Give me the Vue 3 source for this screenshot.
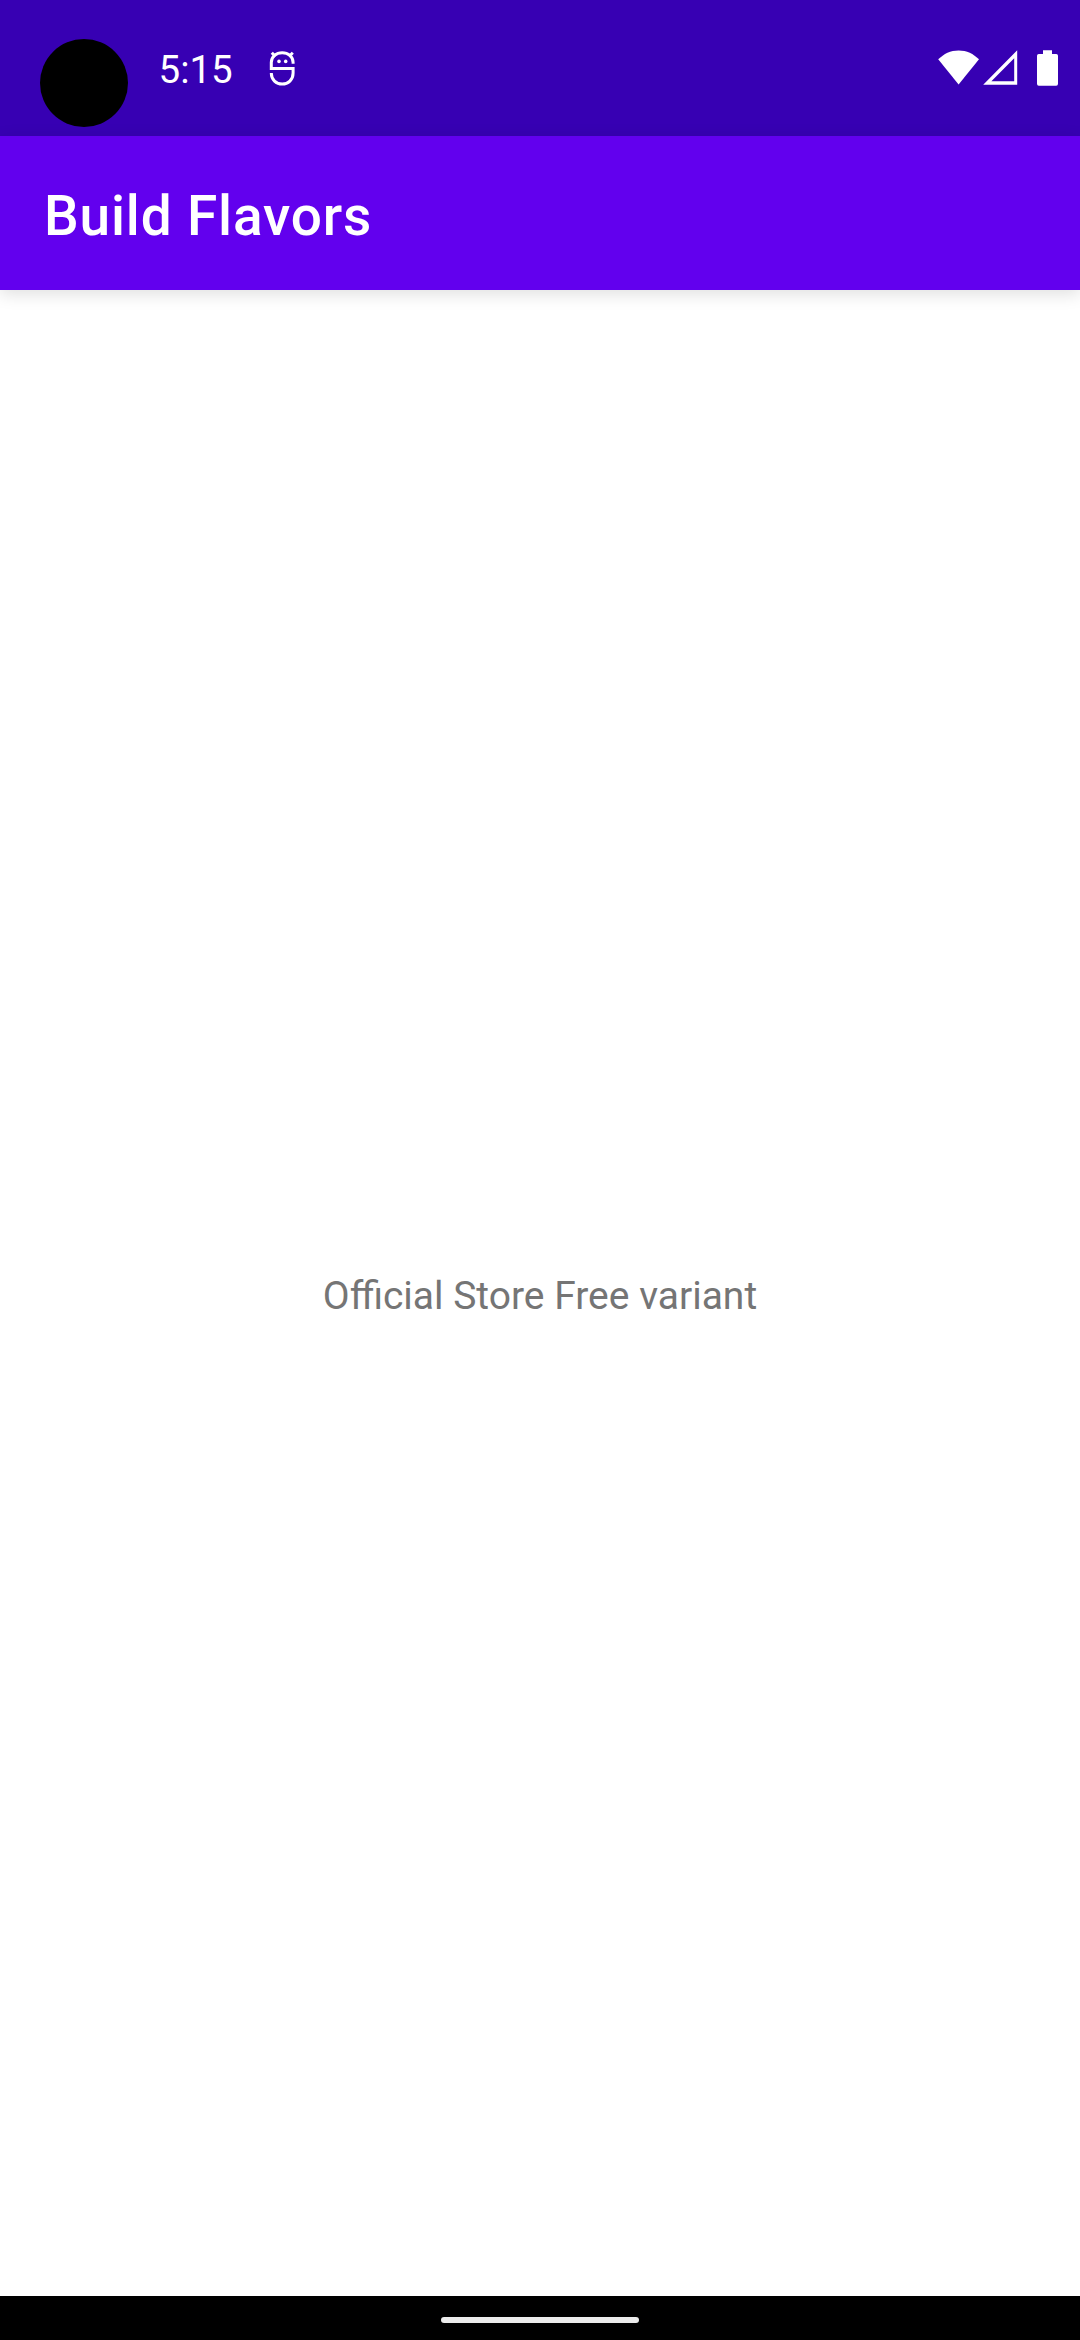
<script setup>
const time = '5:15'
const title = 'Build Flavors'
const message = 'Official Store Free variant'
</script>

<template>
  <div class="screen">
    <header class="status-bar">
      <div class="status-left">
        <span class="camera"></span>
        <span class="time">{{ time }}</span>
        <svg class="debug-icon" width="27" height="37" viewBox="0 0 27 37" fill="none" stroke="#fff">
          <path d="M24.1 13.7V12.5C24.1 6.5 19.2 2.7 13.2 2.7S2.3 6.5 2.3 12.5V18.4H24.1V23C24.1 29.7 19.2 34.1 13.2 34.1S2.3 29.7 2.3 23" stroke-width="3" />
          <path d="M2.8 2.8L6.5 6.5M23.8 2.8L20 6.5" stroke-width="3" />
          <circle cx="10" cy="11.4" r="1.8" fill="#fff" stroke="none" />
          <circle cx="16.7" cy="11.4" r="1.8" fill="#fff" stroke="none" />
        </svg>
      </div>
      <div class="status-right">
        <svg class="wifi" width="42" height="36" viewBox="0 0 42 36" fill="#fff">
          <path d="M0.2 9.3C5.8 3.7 12.5 .4 20.6 .4S35.4 3.7 41 9.3L20.6 34.4Z" />
        </svg>
        <svg class="signal" width="35" height="36" viewBox="0 0 35 36" fill="#fff" fill-rule="evenodd">
          <path d="M34.2 .2V34.8H.2ZM31.2 8.2L8.4 31.2H31.2Z" />
        </svg>
        <svg class="battery" width="21" height="36" viewBox="0 0 21 36" fill="#fff">
          <path d="M6 .3H15V4H19.2Q21 4 21 5.8V33.8Q21 35.7 19.2 35.7H1.8Q0 35.7 0 33.8V5.8Q0 4 1.8 4H6Z" />
        </svg>
      </div>
    </header>
    <div class="app-bar">
      <h1 class="title">{{ title }}</h1>
    </div>
    <main class="content">
      <p class="message">{{ message }}</p>
    </main>
    <footer class="nav-bar">
      <span class="handle"></span>
    </footer>
  </div>
</template>

<style>
body {
  margin: 0;
}
</style>

<style scoped>
.screen {
  display: flex;
  flex-direction: column;
  width: 1080px;
  height: 2340px;
  overflow: hidden;
  background: #fff;
  font-family: Roboto, sans-serif;
}
.status-bar {
  display: flex;
  flex: none;
  justify-content: space-between;
  height: 136px;
  background: #3700b3;
  color: #fff;
}
.status-left,
.status-right {
  display: flex;
  align-items: flex-start;
}
.status-left {
  padding-left: 40px;
}
.camera {
  width: 88px;
  height: 88px;
  margin-top: 39px;
  border-radius: 50%;
  background: #000;
}
.time {
  width: 77.5px;
  margin: 47px 0 0 30.5px;
  font-size: 38.5px;
  line-height: 45px;
  white-space: nowrap;
}
.debug-icon {
  margin: 50px 0 0 33px;
}
.status-right {
  padding: 50px 22px 0 0;
}
.signal {
  margin-left: 3px;
}
.battery {
  margin-left: 19px;
}
.app-bar {
  display: flex;
  flex: none;
  align-items: center;
  box-sizing: border-box;
  height: 154px;
  padding: 6px 0 0 44px;
  background: #6200ee;
  box-shadow: 0 4px 16px rgba(0, 0, 0, 0.13);
  z-index: 1;
}
.title {
  margin: 0;
  color: #fff;
  font-size: 55px;
  font-weight: 500;
  line-height: 64px;
  letter-spacing: 0.82px;
}
.content {
  display: flex;
  flex: 1;
  align-items: center;
  justify-content: center;
}
.message {
  margin: 0;
  padding-top: 6px;
  color: #757575;
  font-size: 39px;
  line-height: 46px;
}
.nav-bar {
  display: flex;
  flex: none;
  align-items: center;
  justify-content: center;
  height: 44px;
  background: #000;
}
.handle {
  width: 198px;
  height: 6px;
  margin-top: 4px;
  border-radius: 3px;
  background: #ebebeb;
}
</style>
